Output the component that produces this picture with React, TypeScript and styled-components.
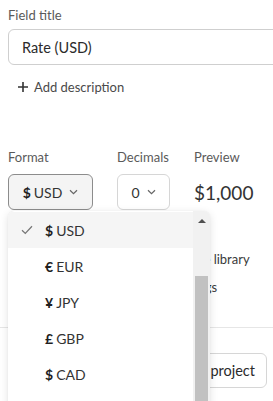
import React from "react";
import styled, { createGlobalStyle } from "styled-components";

const Global = createGlobalStyle`
  html, body { margin: 0; padding: 0; background: #fff; overflow: hidden; }
  body { font-family: Lato, "Open Sans", sans-serif; color: #2b2b2b; }
  * { box-sizing: border-box; }
`;

const Page = styled.div`
  width: 273px;
  height: 401px;
  overflow: hidden;
  padding: 6px 8px 0 8px;
  position: relative;
`;

const Label = styled.div`
  font-size: 13px;
  line-height: 18px;
  color: #5a5a5a;
`;

const TitleInput = styled.div`
  margin-top: 5px;
  width: 300px;
  height: 36px;
  border: 1px solid #cfcfcf;
  border-radius: 6px;
  display: flex;
  align-items: center;
  padding-left: 13px;
  font-size: 14.5px;
  color: #2b2b2b;
`;

const AddDesc = styled.div`
  margin-top: 12px;
  height: 20px;
  display: flex;
  align-items: center;
  gap: 6px;
  padding-left: 10px;
  font-size: 13px;
  color: #4a4a4a;
`;

const FormatRow = styled.div`
  margin-top: 51px;
  display: flex;
  gap: 24px;
`;

const Col = styled.div`
  display: flex;
  flex-direction: column;
  gap: 8px;
  position: relative;
`;

const SelectBtn = styled.div<{ $active?: boolean; $w: number }>`
  width: ${(p) => p.$w}px;
  height: 36px;
  border-radius: 6px;
  border: 1px solid ${(p) => (p.$active ? "#8c8c8c" : "#d6d6d6")};
  background: ${(p) => (p.$active ? "#f4f4f4" : "#fff")};
  display: flex;
  align-items: center;
  justify-content: center;
  gap: 7px;
  font-size: 14px;
  color: #333;
`;

const Sym = styled.b`
  font-weight: 700;
  color: #1f1f1f;
  margin-right: 3px;
`;

const PreviewValue = styled.div`
  height: 36px;
  display: flex;
  align-items: center;
  font-size: 19px;
  color: #333;
`;

const OptionRow = styled.div<{ $first?: boolean }>`
  margin-top: ${(p) => (p.$first ? 39 : 8)}px;
  height: 20px;
  display: flex;
  align-items: center;
  gap: 8px;
  font-size: 13px;
  color: #3a3a3a;
  white-space: nowrap;
`;

const Box = styled.span`
  flex: none;
  width: 14px;
  height: 14px;
  border: 1px solid #bbb;
  border-radius: 3px;
`;

const Divider = styled.div`
  margin: 30px -8px 0 -8px;
  height: 1px;
  background: #e6e6e6;
`;

const Footer = styled.div`
  padding-top: 25px;
  display: flex;
  justify-content: flex-end;
  gap: 8px;
  margin-right: -2px;
`;

const FootBtn = styled.div`
  height: 35px;
  padding: 0 11px;
  border: 1px solid #d6d6d6;
  border-radius: 6px;
  display: flex;
  align-items: center;
  font-size: 14.5px;
  color: #2b2b2b;
  white-space: nowrap;
`;

const Dropdown = styled.div`
  position: absolute;
  top: 63px;
  left: 0;
  width: 202px;
  height: 200px;
  background: #fff;
  border-radius: 6px;
  box-shadow: 0 2px 8px rgba(0, 0, 0, 0.12), 0 0 1px rgba(0, 0, 0, 0.1);
  display: flex;
  overflow: hidden;
  z-index: 5;
`;

const List = styled.div`
  flex: 1;
  padding-top: 1px;
`;

const Item = styled.div<{ $sel?: boolean }>`
  height: 36px;
  display: flex;
  align-items: center;
  padding-left: 37px;
  font-size: 14px;
  color: #333;
  background: ${(p) => (p.$sel ? "#f5f5f5" : "transparent")};
  position: relative;
`;

const CheckWrap = styled.span`
  position: absolute;
  left: 13px;
  top: 13px;
  display: flex;
`;

const Track = styled.div`
  width: 17px;
  background: #f1f1f1;
  display: flex;
  flex-direction: column;
  align-items: center;
`;

const Arrow = styled.div`
  margin-top: 8px;
  width: 0;
  height: 0;
  border-left: 4px solid transparent;
  border-right: 4px solid transparent;
  border-bottom: 4px solid #505050;
`;

const Thumb = styled.div`
  margin-top: 53px;
  width: 13px;
  height: 140px;
  background: #c1c1c1;
`;

const Chevron = () => (
  <svg width="9" height="6" viewBox="0 0 9 6" fill="none">
    <path d="M1 1.2l3.5 3.4L8 1.2" stroke="#666" strokeWidth="1.2" />
  </svg>
);

const currencies = [
  ["$", "USD"],
  ["€", "EUR"],
  ["¥", "JPY"],
  ["£", "GBP"],
  ["$", "CAD"],
];

export default function App() {
  return (
    <Page>
      <Global />
      <Label>Field title</Label>
      <TitleInput>Rate (USD)</TitleInput>
      <AddDesc>
        <svg width="10" height="10" viewBox="0 0 10 10">
          <path d="M5 0v10M0 5h10" stroke="#333" strokeWidth="1.6" />
        </svg>
        Add description
      </AddDesc>
      <FormatRow>
        <Col>
          <Label>Format</Label>
          <SelectBtn $active $w={85}>
            <span>
              <Sym>$</Sym>USD
            </span>
            <Chevron />
          </SelectBtn>
          <Dropdown>
            <List>
              {currencies.map(([s, c], i) => (
                <Item key={c} $sel={i === 0}>
                  {i === 0 && (
                    <CheckWrap>
                      <svg width="12" height="10" viewBox="0 0 12 10" fill="none">
                        <path d="M1 5.2l3.3 3.2L11 1.3" stroke="#777" strokeWidth="1.3" />
                      </svg>
                    </CheckWrap>
                  )}
                  <Sym>{s}</Sym>
                  {c}
                </Item>
              ))}
            </List>
            <Track>
              <Arrow />
              <Thumb />
            </Track>
          </Dropdown>
        </Col>
        <Col>
          <Label>Decimals</Label>
          <SelectBtn $w={53}>
            0 <Chevron />
          </SelectBtn>
        </Col>
        <Col>
          <Label>Preview</Label>
          <PreviewValue>$1,000</PreviewValue>
        </Col>
      </FormatRow>
      <OptionRow $first>
        <Box />
        Save this field to the workspace library
      </OptionRow>
      <OptionRow>
        <Box />
        Use this field in all board settings
      </OptionRow>
      <Divider />
      <Footer>
        <FootBtn>Cancel</FootBtn>
        <FootBtn>Add to project</FootBtn>
      </Footer>
    </Page>
  );
}
